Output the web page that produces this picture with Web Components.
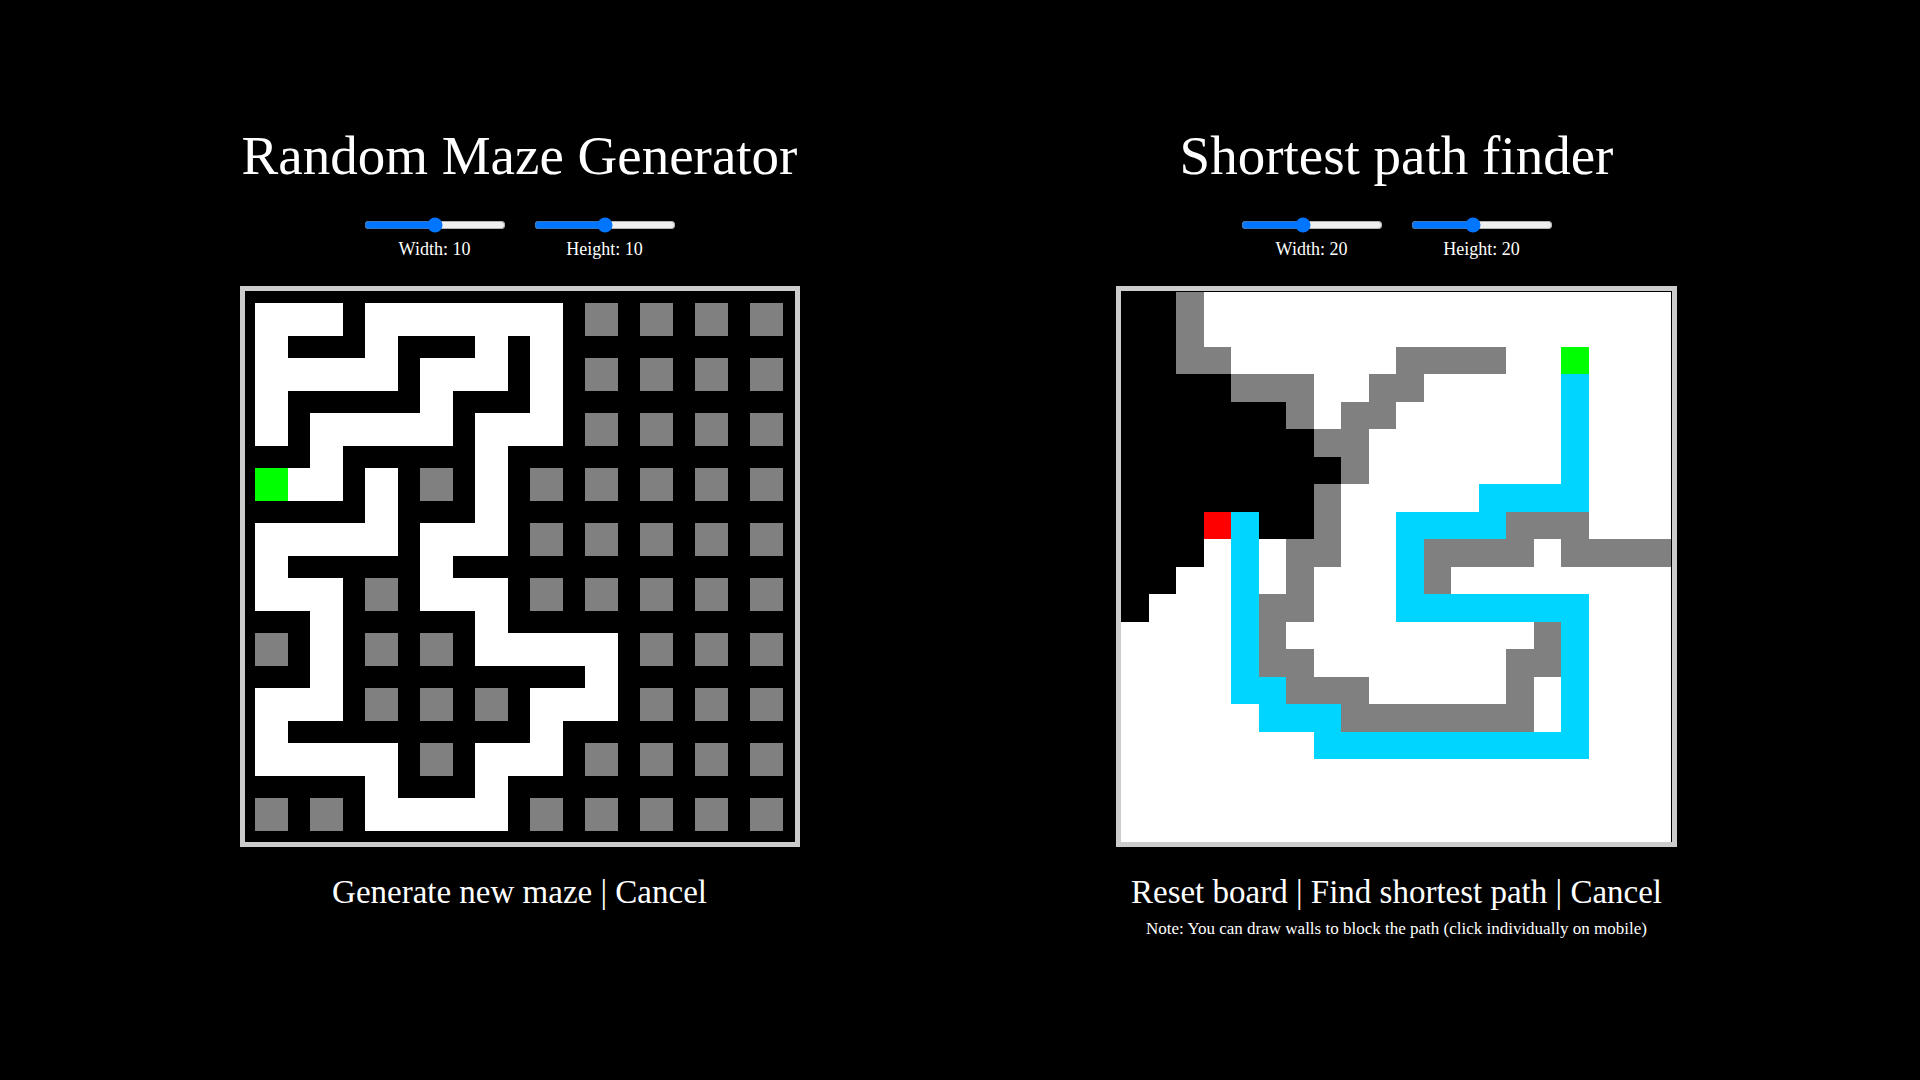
<!DOCTYPE html>
<html lang="en">
<head>
<meta charset="utf-8">
<meta name="viewport" content="width=device-width, initial-scale=1">
<title>Mazes and paths</title>
<style>
  html { background: #000; }
  body { margin: 0; color: #fff; font-family: "Liberation Serif", "Times New Roman", serif; }
</style>
</head>
<body>
<maze-app></maze-app>
<script>
const COLORS = { W: '#fff', G: '#808080', S: '#00ff00', R: '#ff0000', C: '#00d5ff' };

const MAZE = [
  'WWW.WWWWWWW.G.G.G.G',
  'W...W...W.W........',
  'WWWWW.WWW.W.G.G.G.G',
  'W.....W...W........',
  'W.WWWWW.WWW.G.G.G.G',
  '..W.....W..........',
  'SWW.W.G.W.G.G.G.G.G',
  '....W...W..........',
  'WWWWW.WWW.G.G.G.G.G',
  'W.....W............',
  'WWW.G.WWW.G.G.G.G.G',
  '..W.....W..........',
  'G.W.G.G.WWWWW.G.G.G',
  '..W.........W......',
  'WWW.G.G.G.WWW.G.G.G',
  'W.........W........',
  'WWWWW.G.WWW.G.G.G.G',
  '....W...W..........',
  'G.G.WWWWW.G.G.G.G.G'
];

const FIELD = [
  '..GWWWWWWWWWWWWWWWWW',
  '..GWWWWWWWWWWWWWWWWW',
  '..GGWWWWWWGGGGWWSWWW',
  '....GGGWWGGWWWWWCWWW',
  '......GWGGWWWWWWCWWW',
  '.......GGWWWWWWWCWWW',
  '........GWWWWWWWCWWW',
  '.......GWWWWWCCCCWWW',
  '...RC..GWWCCCCGGGWWW',
  '...WCWGGWWCGGGGWGGGG',
  '..WWCWGWWWCGWWWWWWWW',
  '.WWWCGGWWWCCCCCCCWWW',
  'WWWWCGWWWWWWWWWGCWWW',
  'WWWWCGGWWWWWWWGGCWWW',
  'WWWWCCGGGWWWWWGWCWWW',
  'WWWWWCCCGGGGGGGWCWWW',
  'WWWWWWWCCCCCCCCCCWWW',
  'WWWWWWWWWWWWWWWWWWWW',
  'WWWWWWWWWWWWWWWWWWWW',
  'WWWWWWWWWWWWWWWWWWWW'
];

/* Edge positions: rooms are 33 units and the walls between them 22. */
const mazeEdge = k => Math.floor(k / 2) * 55 + (k % 2) * 33;

const BOARDS = {
  maze: { rows: MAZE, width: 550, height: 551, x: k => 10 + mazeEdge(k), y: k => 12 + mazeEdge(k) },
  field: { rows: FIELD, width: 551, height: 551, x: k => Math.ceil(27.5 * k), y: k => Math.floor(27.5 * k) + 1 }
};

class GridBoard extends HTMLElement {
  connectedCallback() {
    const b = BOARDS[this.getAttribute('kind')];
    let rects = '';
    b.rows.forEach((row, r) => {
      for (const run of row.matchAll(/([WGSRC])\1*/g)) {
        const x = b.x(run.index), y = b.y(r);
        const w = b.x(run.index + run[0].length) - x, h = b.y(r + 1) - y;
        rects += `<rect x="${x}" y="${y}" width="${w}" height="${h}" fill="${COLORS[run[1]]}"/>`;
      }
    });
    this.attachShadow({ mode: 'open' }).innerHTML = `
      <style>
        :host { display: block; border: 5px solid #ccc; max-width: 100%; }
        svg { display: block; max-width: 100%; height: auto; }
      </style>
      <svg width="${b.width}" height="${b.height}" viewBox="0 0 ${b.width} ${b.height}"
           shape-rendering="crispEdges" role="img" aria-label="${this.getAttribute('label')}">${rects}</svg>`;
  }
}
customElements.define('grid-board', GridBoard);

class SizeSlider extends HTMLElement {
  connectedCallback() {
    const name = this.getAttribute('name');
    const attr = k => this.getAttribute(k);
    this.attachShadow({ mode: 'open' }).innerHTML = `
      <style>
        :host { display: flex; flex-direction: column; align-items: center; gap: 6px; }
        input { width: 142px; height: 16px; margin: 0; accent-color: #0075ff; }
        label { font-size: 18px; line-height: 20px; }
      </style>
      <input id="range" type="range" min="${attr('min')}" max="${attr('max')}" value="${attr('value')}">
      <label for="range">${name}: ${attr('value')}</label>`;
    const input = this.shadowRoot.querySelector('input');
    input.addEventListener('input', () => {
      this.shadowRoot.querySelector('label').textContent = `${name}: ${input.value}`;
    });
  }
}
customElements.define('size-slider', SizeSlider);

class TextAction extends HTMLElement {
  connectedCallback() {
    this.attachShadow({ mode: 'open' }).innerHTML = `
      <style>
        :host { display: inline; }
        button { display: inline; margin: 0; padding: 0; border: 0; background: none; color: inherit; font: inherit; cursor: pointer; }
      </style><button type="button"><slot></slot></button>`;
  }
}
customElements.define('text-action', TextAction);

class ToolPanel extends HTMLElement {
  connectedCallback() {
    this.attachShadow({ mode: 'open' }).innerHTML = `
      <style>
        :host { display: flex; flex-direction: column; align-items: center; min-width: 0; text-align: center; }
        h1 { margin: 0; font-size: 55px; line-height: 66px; font-weight: 400; }
        .sliders { display: flex; gap: 28px; margin: 28px 0 27px; }
        .actions { margin-top: 26px; font-size: 33px; line-height: 38px; }
        .note { margin-top: 8px; font-size: 17px; line-height: 20px; }
      </style>
      <h1><slot name="title"></slot></h1>
      <div class="sliders"><slot name="slider"></slot></div>
      <slot name="board"></slot>
      <div class="actions"><slot name="actions"></slot></div>
      <div class="note"><slot name="note"></slot></div>`;
  }
}
customElements.define('tool-panel', ToolPanel);

class MazeApp extends HTMLElement {
  connectedCallback() {
    this.attachShadow({ mode: 'open' }).innerHTML = `
      <style>
        :host { display: block; }
        main { display: grid; grid-template-columns: 1fr 1fr; align-items: start; padding: 123px 85px 40px 81px; }
        @media (max-width: 1300px) { main { grid-template-columns: 1fr; row-gap: 60px; padding: 40px 16px; } }
      </style>
      <main>
        <tool-panel>
          <span slot="title">Random Maze Generator</span>
          <size-slider slot="slider" name="Width" min="5" max="15" value="10"></size-slider>
          <size-slider slot="slider" name="Height" min="5" max="15" value="10"></size-slider>
          <grid-board slot="board" kind="maze" label="Maze in progress"></grid-board>
          <span slot="actions"><text-action>Generate new maze</text-action> | <text-action>Cancel</text-action></span>
        </tool-panel>
        <tool-panel>
          <span slot="title">Shortest path finder</span>
          <size-slider slot="slider" name="Width" min="5" max="40" value="20"></size-slider>
          <size-slider slot="slider" name="Height" min="5" max="40" value="20"></size-slider>
          <grid-board slot="board" kind="field" label="Path across the board"></grid-board>
          <span slot="actions"><text-action>Reset board</text-action> | <text-action>Find shortest path</text-action> | <text-action>Cancel</text-action></span>
          <span slot="note">Note: You can draw walls to block the path (click individually on mobile)</span>
        </tool-panel>
      </main>`;
  }
}
customElements.define('maze-app', MazeApp);
</script>
</body>
</html>
